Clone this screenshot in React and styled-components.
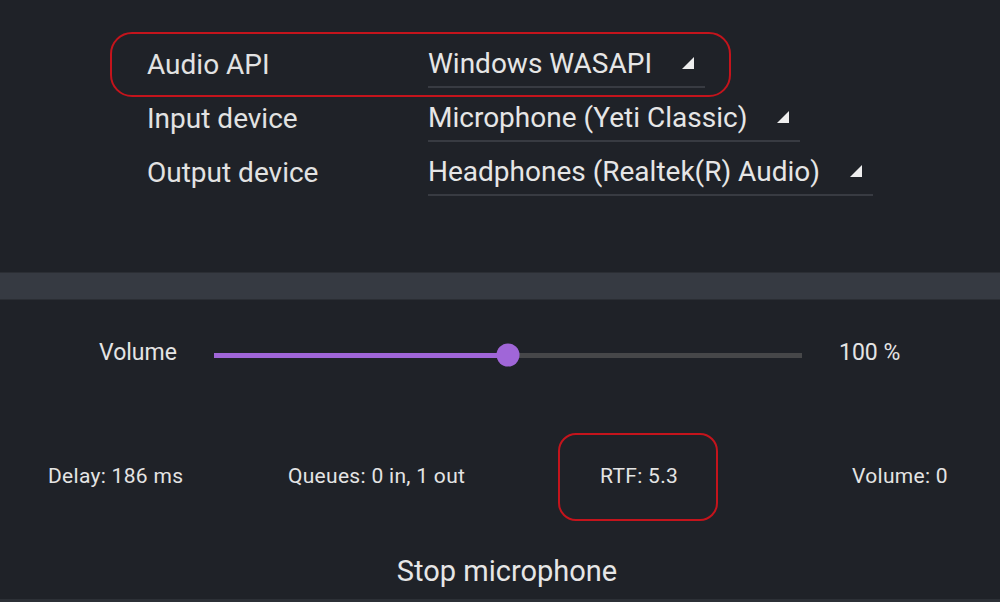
import React from 'react';
import styled, { createGlobalStyle } from 'styled-components';

const GlobalStyle = createGlobalStyle`
  html, body {
    margin: 0;
    padding: 0;
    background: #1f2228;
  }
  body {
    font-family: Roboto, 'Liberation Sans', sans-serif;
    color: #e4e4e4;
  }
`;

const Screen = styled.div`
  width: 1000px;
  height: 602px;
  overflow: hidden;
  background: #1f2228;
  display: flex;
  flex-direction: column;
  border-bottom: 3px solid #2c3036;
  box-sizing: border-box;
`;

// Bloco de configuração dos dispositivos
const DeviceList = styled.section`
  height: 272px;
  padding-top: 40px;
  box-sizing: border-box;
  display: flex;
  flex-direction: column;
  gap: 6px;
`;

const Row = styled.div`
  position: relative;
  display: grid;
  grid-template-columns: 281px auto;
  align-items: center;
  padding-left: 147px;
  font-size: 28px;

  ${({ $marked }) => $marked && `
    &::after {
      content: '';
      position: absolute;
      left: 110px;
      top: -8px;
      width: 621px;
      height: 65px;
      box-sizing: border-box;
      border: 2px solid #c4141c;
      border-radius: 22px;
      pointer-events: none;
    }
  `}
`;

const Label = styled.span`
  color: #e2e2e2;
`;

const Combo = styled.div`
  justify-self: start;
  display: inline-flex;
  align-items: center;
  gap: 30px;
  height: 48px;
  padding-right: 11px;
  border-bottom: 2px solid #383b42;
  box-sizing: border-box;
  color: #e6e6e6;
`;

const Arrow = () => (
  <svg width="12" height="12" viewBox="0 0 12 12">
    <polygon points="12,0 12,12 0,12" fill="#eeeeee" />
  </svg>
);

const Band = styled.div`
  height: 26px;
  background: #363a42;
  border-top: 1px solid #2b2e34;
  border-bottom: 1px solid #2b2e34;
`;

const VolumeRow = styled.div`
  display: flex;
  align-items: center;
  margin-top: 37px;
  padding-left: 99px;
  height: 30px;
  font-size: 23px;
`;

const VolumeLabel = styled.span`
  width: 115px;
`;

const Track = styled.div`
  position: relative;
  width: 588px;
  height: 5px;
  background: #464749;
  margin-top: 6px;
`;

const Fill = styled.div`
  height: 100%;
  background: #a066d8;
`;

const Thumb = styled.div`
  position: absolute;
  top: 50%;
  width: 23px;
  height: 23px;
  border-radius: 50%;
  background: #a066d8;
  transform: translate(-50%, -50%);
`;

const VolumeValue = styled.span`
  margin-left: 37px;
`;

const Stats = styled.div`
  display: grid;
  grid-template-columns: 240px 312px 252px 1fr;
  align-items: center;
  margin-top: 94px;
  padding-left: 48px;
  height: 30px;
  font-size: 21px;
  letter-spacing: 0.3px;
`;

const Stat = styled.span`
  position: relative;

  ${({ $marked }) => $marked && `
    &::after {
      content: '';
      position: absolute;
      left: -42px;
      top: -31px;
      width: 160px;
      height: 88px;
      box-sizing: border-box;
      border: 2px solid #c4141c;
      border-radius: 18px;
      pointer-events: none;
    }
  `}
`;

const StopButton = styled.button`
  margin-top: 63px;
  align-self: center;
  padding: 0 0 0 14px;
  background: none;
  border: none;
  color: #e6e6e6;
  font-family: Roboto, 'Liberation Sans', sans-serif;
  font-size: 29px;
  cursor: pointer;
`;

const devices = [
  { label: 'Audio API', value: 'Windows WASAPI', marked: true },
  { label: 'Input device', value: 'Microphone (Yeti Classic)' },
  { label: 'Output device', value: 'Headphones (Realtek(R) Audio)' },
];

const stats = [
  { text: 'Delay: 186 ms' },
  { text: 'Queues: 0 in, 1 out' },
  { text: 'RTF: 5.3', marked: true },
  { text: 'Volume: 0' },
];

const volume = 0.5;

export default function App() {
  return (
    <>
      <GlobalStyle />
      <Screen>
        <DeviceList>
          {devices.map((d) => (
            <Row key={d.label} $marked={d.marked}>
              <Label>{d.label}</Label>
              <Combo>
                <span>{d.value}</span>
                <Arrow />
              </Combo>
            </Row>
          ))}
        </DeviceList>

        <Band />

        <VolumeRow>
          <VolumeLabel>Volume</VolumeLabel>
          <Track>
            <Fill style={{ width: `${volume * 100}%` }} />
            <Thumb style={{ left: `${volume * 100}%` }} />
          </Track>
          <VolumeValue>100 %</VolumeValue>
        </VolumeRow>

        <Stats>
          {stats.map((s) => (
            <Stat key={s.text} $marked={s.marked}>{s.text}</Stat>
          ))}
        </Stats>

        <StopButton>Stop microphone</StopButton>
      </Screen>
    </>
  );
}
